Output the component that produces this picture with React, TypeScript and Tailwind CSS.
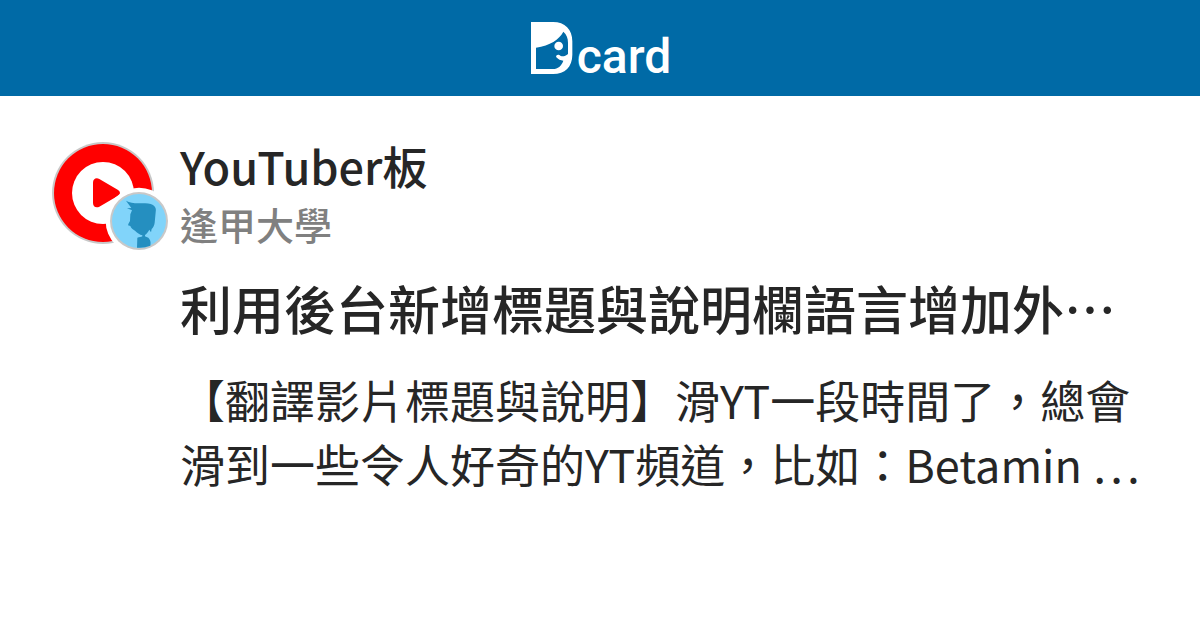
import React from "react";

type Post = {
  forum: string;
  school: string;
  title: string;
  excerpt: string;
};

const POST: Post = {
  forum: "YouTuber板",
  school: "逢甲大學",
  title: "利用後台新增標題與說明欄語言增加外…",
  excerpt:
    "【翻譯影片標題與說明】滑YT一段時間了，總會滑到一些令人好奇的YT頻道，比如：Betamin ",
};

function Logo() {
  return (
    <div className="flex h-13 items-end gap-1 pl-0.5 text-white">
      <svg className="h-13 w-[42px]" viewBox="0 0 126 156" aria-hidden="true">
        <path
          fill="currentColor"
          fillRule="evenodd"
          d="M0 0H66C102 0 124 22 124 58V98C124 134 102 156 66 156H0ZM15 77V141H66C81 141 91 132 97 116C89 116 81 112 76 106C73 101 80 96 85 99C91 105 102 104 111 96V62C111 48 107 38 97 29C84 53 58 70 15 77Z"
        />
        <circle cx="83" cy="72" r="13" fill="currentColor" />
      </svg>
      <span className="font-['Roboto',sans-serif] text-5xl leading-[34px] font-medium">card</span>
    </div>
  );
}

function ForumAvatar() {
  return (
    <svg className="h-[108px] w-[116px] shrink-0" viewBox="36 36 348 324" aria-hidden="true">
      <circle cx="189" cy="189" r="153" fill="#c8c8c8" />
      <circle cx="189" cy="189" r="147" fill="#ff0000" />
      <circle cx="189" cy="189" r="93" fill="#ffffff" />
      <path
        d="M159 158C159 147 168 142 178 147L233 179C242 184 242 193 233 198L178 230C168 235 159 230 159 219Z"
        fill="#ff0000"
      />
      <circle cx="297" cy="273" r="100" fill="#ffffff" />
      <circle cx="297" cy="273" r="87" fill="#c8c8c8" />
      <circle cx="297" cy="273" r="81" fill="#81d4fa" />
      <path
        d="M258 212C268 219 281 219 295 220C311 220 328 219 339 225C347 230 349 237 347 247L344 278C343 287 339 293 335 297L333 307L328 299C324 306 319 312 315 315V319C318 322 325 321 328 327C333 334 332 342 331 347Q312 355 291 353L292 323C297 321 304 321 307 319V316C299 314 291 308 285 302C279 299 273 295 271 288L264 286L266 280L270 273L271 253L276 241L261 235L274 234Z"
        fill="#258fc0"
      />
    </svg>
  );
}

export default function App() {
  return (
    <div className="min-h-screen bg-white font-['Noto_Sans_CJK_TC',sans-serif] text-[#262626]" lang="zh-Hant">
      <header className="flex h-24 items-center justify-center bg-[#006aa6]">
        <Logo />
      </header>

      <main className="flex gap-3 pt-[46px] pr-[60px] pl-[52px]">
        <ForumAvatar />
        <article className="min-w-0 flex-1">
          <div className="text-[45px] leading-12 font-medium">{POST.forum}</div>
          <div className="mt-1 text-[38px] leading-[60px] font-medium text-[#808080]">{POST.school}</div>
          <h1 className="mt-[18px] text-[52px] leading-18 font-medium">{POST.title}</h1>
          <p className="mt-6 text-[45px] leading-16">
            {POST.excerpt}
            {/* proportional form keeps the dots on the baseline */}
            <span className="[font-feature-settings:'pwid']">…</span>
          </p>
        </article>
      </main>
    </div>
  );
}
